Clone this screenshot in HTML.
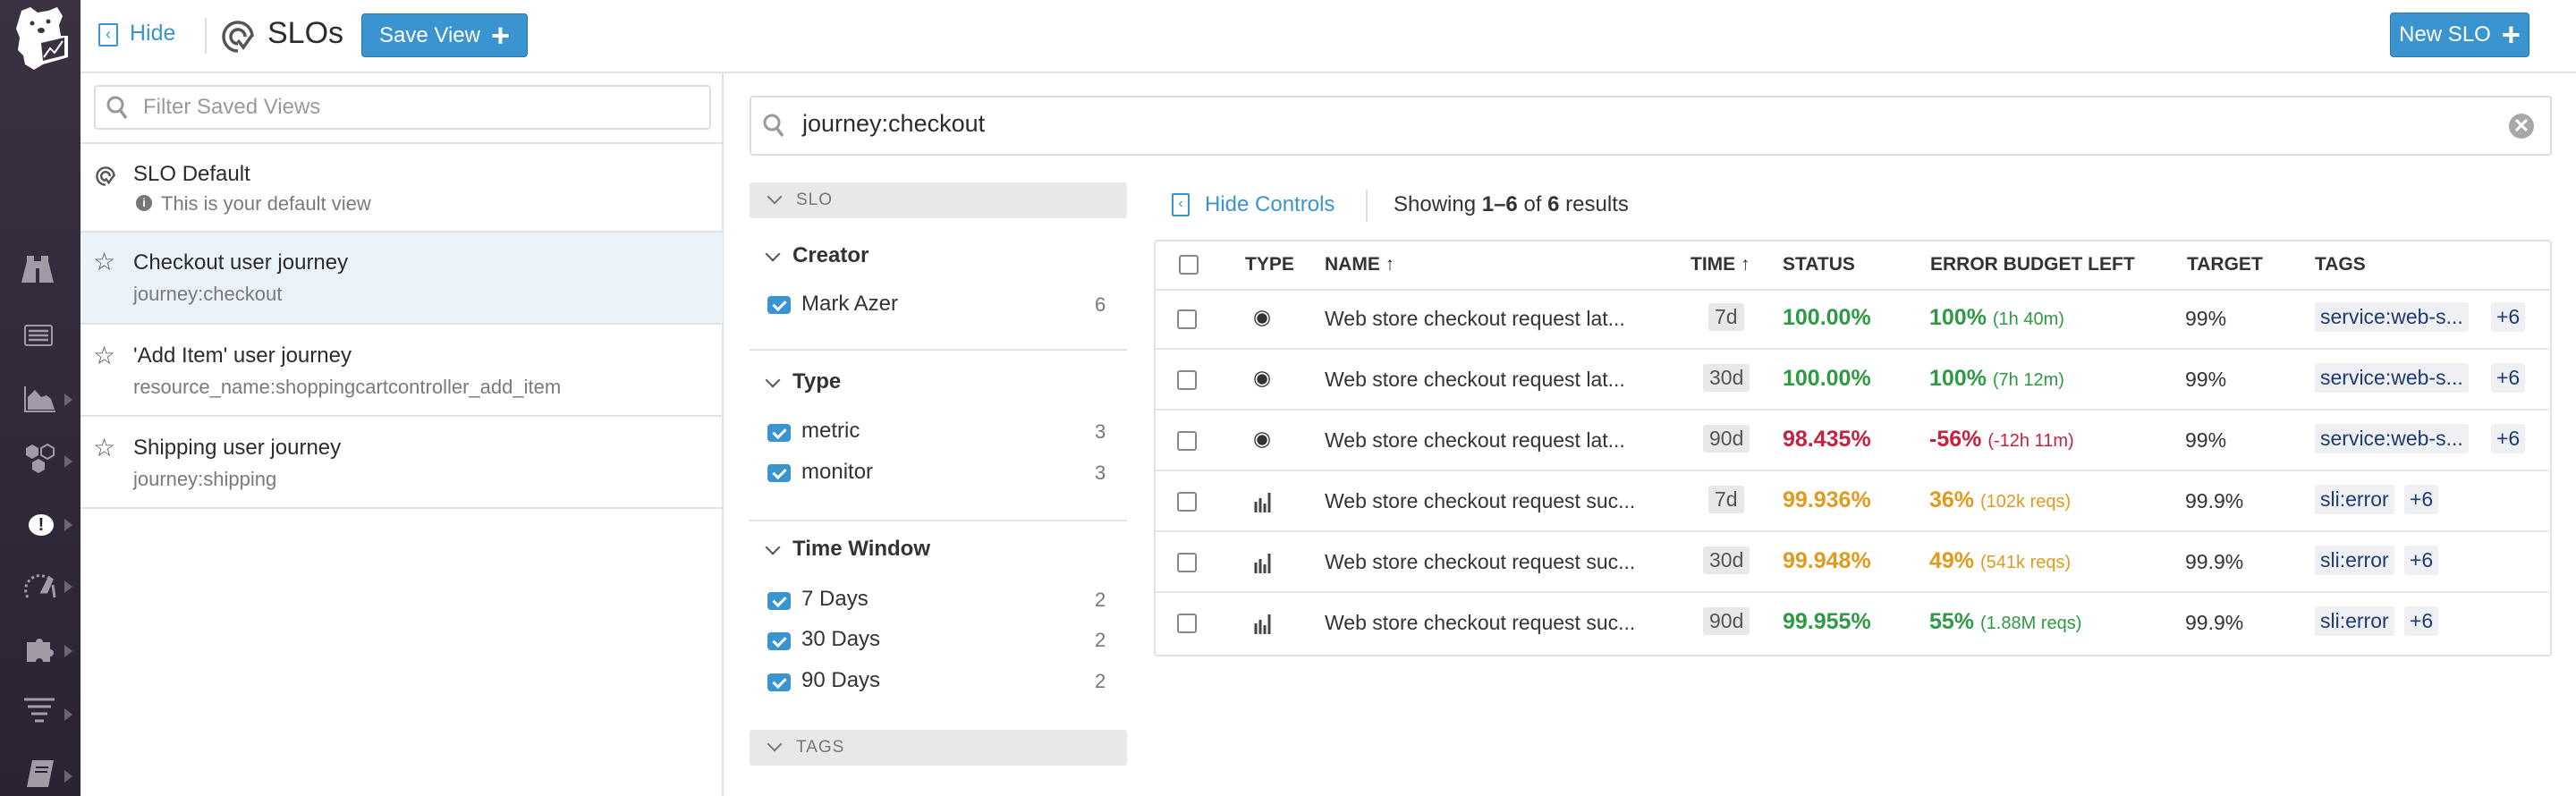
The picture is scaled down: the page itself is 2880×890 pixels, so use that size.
<!DOCTYPE html>
<html><head><meta charset="utf-8"><style>
*{box-sizing:border-box;margin:0;padding:0}
body{width:2880px;height:890px;overflow:hidden;background:#fff;font-family:"Liberation Sans",sans-serif;color:#2c2c2c;position:relative}
.a{position:absolute}
.side{left:0;top:0;width:90px;height:890px;background:linear-gradient(#3a3142,#2a2333)}
.btn{background:#3a94cf;border:1px solid #2a78ad;border-radius:4px;color:#fff;font-size:24px;display:flex;align-items:center;justify-content:center;gap:12px;white-space:nowrap}
.plus{font-size:36px;font-weight:bold;line-height:1}
.row{position:absolute;left:90px;width:718px;border-bottom:2px solid #e2e2e2}
.t1{position:absolute;left:59px;font-size:24px;color:#2c2c2c}
.t2{position:absolute;left:59px;font-size:22px;color:#7a7a7a}
.star{position:absolute;left:14px;font-size:28px;color:#555}
.fh{position:absolute;left:838px;width:422px;height:40px;background:#e8e8ea;border-radius:3px;color:#777;font-size:19px;padding-left:52px;line-height:40px;letter-spacing:1px}
.fh:before{content:"";position:absolute;left:22px;top:10px;width:10px;height:10px;border-right:2px solid #777;border-bottom:2px solid #777;transform:rotate(45deg)}
.fs{position:absolute;left:886px;font-size:24px;font-weight:bold;color:#333}
.fs:before{content:"";position:absolute;left:-28px;top:6px;width:10px;height:10px;border-right:2px solid #555;border-bottom:2px solid #555;transform:rotate(45deg)}
.cb{position:absolute;left:858px;width:26px;height:20px;background:#3a94cf;border-radius:4px}
.cb:after{content:"";position:absolute;left:9px;top:2px;width:6px;height:11px;border-right:3px solid #fff;border-bottom:3px solid #fff;transform:rotate(45deg)}
.fl{position:absolute;left:896px;font-size:24px;color:#333}
.fc{position:absolute;left:1224px;font-size:22px;color:#777}
.hr{position:absolute;left:838px;width:422px;height:2px;background:#e2e2e2}
.tbl{left:1290px;top:268px;width:1563px;height:466px;border:2px solid #e2e2e2;border-radius:4px}
.tr{position:absolute;left:0;width:1559px;border-bottom:2px solid #e2e2e2;height:68px}
.tr>*{position:absolute}
.chk{left:26px;width:22px;height:22px;border:2px solid #888;border-radius:3px;top:23px}
.th{font-size:21px;font-weight:bold;color:#333;top:17px}
.td{font-size:23px;color:#333;top:20px}
.pill{background:#e8e8e8;border-radius:3px;color:#555;font-size:23px;padding:2px 7px;top:16px}
.st{font-size:25px;font-weight:bold;top:18px}
.g{color:#2e9b44}.r{color:#c4223e}.o{color:#e19a1d}
.sm{font-size:20px;font-weight:normal}
.tag{background:#eef0f3;border-radius:3px;color:#1f3a6e;font-size:23px;padding:3px 6px;top:15px}
.arr{position:absolute;left:72px;width:0;height:0;border-left:9px solid #6c6573;border-top:7px solid transparent;border-bottom:7px solid transparent}
</style></head><body>
<div class="a side">
 <svg class="a" style="left:12px;top:6px" width="68" height="72" viewBox="0 0 68 72"><path d="M12 6 L22 2 L30 8 L42 6 L52 2 L58 12 L54 22 L56 34 L64 34 L64 58 L36 66 L26 72 L16 66 L14 56 L8 50 L10 36 L6 26 Z" fill="#fff"/><path d="M34 42 L60 36 L60 56 L36 62 Z" fill="#3a3142"/><path d="M37 58 L44 48 L49 53 L58 40" stroke="#fff" stroke-width="2" fill="none"/><circle cx="24" cy="20" r="2.5" fill="#3a3142"/><circle cx="42" cy="18" r="2.5" fill="#3a3142"/><ellipse cx="34" cy="28" rx="4" ry="3" fill="#3a3142"/></svg>
 <svg class="a" style="left:24px;top:286px" width="36" height="30" viewBox="0 0 36 30"><path d="M6 0h8v6h8V0h8v6l6 24H20V14h-4v16H0L6 6z" fill="#a09ba6"/></svg>
 <svg class="a" style="left:27px;top:363px" width="32" height="24" viewBox="0 0 32 24"><rect x="1" y="1" width="30" height="22" rx="2" fill="none" stroke="#a09ba6" stroke-width="2"/><path d="M5 7h22M5 12h22M5 17h22" stroke="#a09ba6" stroke-width="2.5"/></svg>
 <svg class="a" style="left:26px;top:432px" width="36" height="30" viewBox="0 0 36 30"><path d="M2 0v28h34" stroke="#a09ba6" stroke-width="2" fill="none"/><path d="M5 26V12l8-8 7 8 6-2 5 4 4 12z" fill="#a09ba6"/></svg>
 <svg class="a" style="left:28px;top:495px" width="34" height="34" viewBox="0 0 34 34"><path d="M8 2l7 4v8l-7 4-7-4V6z M15 18l7 4v8l-7 4-7-4v-8z" fill="#a09ba6"/><path d="M25 2l7 4v8l-7 4-7-4V6z" fill="none" stroke="#a09ba6" stroke-width="2"/></svg>
 <div class="a" style="left:32px;top:575px;width:28px;height:24px;background:#fff;border-radius:50%;color:#2a2333;font-weight:bold;font-size:20px;text-align:center;line-height:24px">!</div>
 <svg class="a" style="left:27px;top:640px" width="36" height="30" viewBox="0 0 36 30"><path d="M4 28A16 16 0 0 1 26 6" stroke="#a09ba6" stroke-width="3" stroke-dasharray="3 3" fill="none"/><path d="M20 22l8-16 3 2-6 14z M32 14l2 14" stroke="#a09ba6" stroke-width="3" fill="#a09ba6"/></svg>
 <svg class="a" style="left:30px;top:710px" width="32" height="30" viewBox="0 0 32 30"><path d="M0 8h10a4 4 0 1 1 8 0h8v8a4 4 0 1 1 0 8v6H18a4 4 0 1 0-8 0H0z" fill="#a09ba6"/></svg>
 <svg class="a" style="left:27px;top:780px" width="34" height="30" viewBox="0 0 34 30"><path d="M0 2h34M4 10h26M8 18h18M12 26h10" stroke="#a09ba6" stroke-width="3"/></svg>
 <svg class="a" style="left:28px;top:850px" width="32" height="30" viewBox="0 0 32 30"><path d="M8 0h24l-6 30H2z" fill="#a09ba6"/><path d="M12 8h14M11 13h14" stroke="#2a2333" stroke-width="2"/></svg>
 <div class="arr" style="top:440px"></div>
 <div class="arr" style="top:509px"></div>
 <div class="arr" style="top:580px"></div>
 <div class="arr" style="top:649px"></div>
 <div class="arr" style="top:721px"></div>
 <div class="arr" style="top:792px"></div>
 <div class="arr" style="top:861px"></div>
</div>
<!-- top bar -->
<div class="a" style="left:90px;top:80px;width:2790px;height:2px;background:#e2e2e2"></div>
<div class="a" style="left:110px;top:26px;width:22px;height:26px;border:2px solid #3a94cf;border-radius:2px;color:#3a94cf;font-size:18px;line-height:20px;text-align:center">‹</div>
<div class="a" style="left:145px;top:23px;font-size:25px;color:#3a94cf">Hide</div>
<div class="a" style="left:229px;top:20px;width:2px;height:40px;background:#ddd"></div>
<svg class="a" style="left:246px;top:21px" width="40" height="40" viewBox="0 0 40 40"><path d="M20 36A16 16 0 1 1 36 20" stroke="#555" stroke-width="3.5" fill="none"/><path d="M20 28A8 8 0 1 1 28 20" stroke="#555" stroke-width="3.5" fill="none"/><path d="M20 24l6 8 10-14" stroke="#555" stroke-width="3.5" fill="none"/></svg>
<div class="a" style="left:299px;top:18px;font-size:34px;color:#2c2c2c">SLOs</div>
<div class="a btn" style="left:404px;top:15px;width:186px;height:49px">Save View <span class="plus">+</span></div>
<div class="a btn" style="left:2672px;top:14px;width:156px;height:50px">New SLO <span class="plus">+</span></div>
<!-- left panel -->
<div class="a" style="left:807px;top:82px;width:2px;height:808px;background:#e2e2e2"></div>
<div class="a" style="left:105px;top:95px;width:690px;height:50px;border:2px solid #ddd;border-radius:4px"></div>
<svg class="a" style="left:118px;top:106px" width="26" height="28" viewBox="0 0 26 28"><circle cx="11" cy="11" r="8" stroke="#999" stroke-width="3" fill="none"/><path d="M17 18l6 8" stroke="#999" stroke-width="3.5"/></svg>
<div class="a" style="left:160px;top:106px;font-size:24px;color:#9a9a9a">Filter Saved Views</div>
<div class="a" style="left:90px;top:159px;width:718px;height:2px;background:#e2e2e2"></div>
<div class="row" style="top:161px;height:99px"><svg class="a" style="left:16px;top:24px" width="24" height="24" viewBox="0 0 40 40"><path d="M20 36A16 16 0 1 1 36 20" stroke="#555" stroke-width="4" fill="none"/><path d="M20 28A8 8 0 1 1 28 20" stroke="#555" stroke-width="4" fill="none"/><path d="M20 24l6 8 10-14" stroke="#555" stroke-width="4" fill="none"/></svg><div class="t1" style="top:20px">SLO Default</div><div class="a" style="left:62px;top:57px;width:18px;height:18px;border-radius:50%;background:#777;color:#fff;font-size:13px;font-weight:bold;text-align:center;line-height:18px">i</div><div class="t2" style="left:90px;top:54px">This is your default view</div></div>
<div class="row" style="top:260px;height:103px;background:#ebf3fa"><div class="star" style="top:16px">☆</div><div class="t1" style="top:20px">Checkout user journey</div><div class="t2" style="top:56px">journey:checkout</div></div>
<div class="row" style="top:363px;height:103px"><div class="star" style="top:18px">☆</div><div class="t1" style="top:21px">'Add Item' user journey</div><div class="t2" style="top:57px">resource_name:shoppingcartcontroller_add_item</div></div>
<div class="row" style="top:466px;height:103px"><div class="star" style="top:18px">☆</div><div class="t1" style="top:21px">Shipping user journey</div><div class="t2" style="top:57px">journey:shipping</div></div>
<!-- search -->
<div class="a" style="left:838px;top:107px;width:2015px;height:67px;border:2px solid #ddd;border-radius:4px"></div>
<svg class="a" style="left:852px;top:126px" width="26" height="28" viewBox="0 0 26 28"><circle cx="11" cy="11" r="8" stroke="#999" stroke-width="3" fill="none"/><path d="M17 18l6 8" stroke="#999" stroke-width="3.5"/></svg>
<div class="a" style="left:897px;top:123px;font-size:27px;color:#2c2c2c">journey:checkout</div>
<div class="a" style="left:2805px;top:127px;width:28px;height:28px;border-radius:50%;background:#a8a8ab;color:#fff;font-size:22px;font-weight:bold;text-align:center;line-height:28px">✕</div>
<!-- filters -->
<div class="fh" style="top:204px">SLO</div>
<div class="fs" style="top:272px">Creator</div>
<div class="cb" style="top:331px"></div><div class="fl" style="top:326px">Mark Azer</div><div class="fc" style="top:328px">6</div>
<div class="hr" style="top:390px"></div>
<div class="fs" style="top:413px">Type</div>
<div class="cb" style="top:474px"></div><div class="fl" style="top:468px">metric</div><div class="fc" style="top:470px">3</div>
<div class="cb" style="top:519px"></div><div class="fl" style="top:514px">monitor</div><div class="fc" style="top:516px">3</div>
<div class="hr" style="top:581px"></div>
<div class="fs" style="top:600px">Time Window</div>
<div class="cb" style="top:662px"></div><div class="fl" style="top:656px">7 Days</div><div class="fc" style="top:658px">2</div>
<div class="cb" style="top:707px"></div><div class="fl" style="top:701px">30 Days</div><div class="fc" style="top:703px">2</div>
<div class="cb" style="top:753px"></div><div class="fl" style="top:747px">90 Days</div><div class="fc" style="top:749px">2</div>
<div class="fh" style="top:816px">TAGS</div>
<!-- table controls -->
<div class="a" style="left:1310px;top:216px;width:20px;height:26px;border:2px solid #3a94cf;border-radius:2px;color:#3a94cf;font-size:16px;line-height:20px;text-align:center">‹</div>
<div class="a" style="left:1347px;top:215px;font-size:24px;color:#3a94cf">Hide Controls</div>
<div class="a" style="left:1527px;top:212px;width:2px;height:36px;background:#ddd"></div>
<div class="a" style="left:1558px;top:215px;font-size:24px;color:#333">Showing <b>1–6</b> of <b>6</b> results</div>
<div class="a tbl">
 <div class="tr" style="top:0;height:55px"><div class="chk" style="top:15px"></div><div class="th" style="left:100px;top:14px">TYPE</div><div class="th" style="left:189px;top:14px">NAME ↑</div><div class="th" style="left:598px;top:14px">TIME ↑</div><div class="th" style="left:701px;top:14px">STATUS</div><div class="th" style="left:866px;top:14px">ERROR BUDGET LEFT</div><div class="th" style="left:1153px;top:14px">TARGET</div><div class="th" style="left:1296px;top:14px">TAGS</div></div>
</div>
<div class="a" style="left:1290px;top:323px;width:1563px">
 <div class="tr" style="top:0"><div class="chk"></div><div class="td" style="left:111px;top:18px">◉</div><div class="td" style="left:191px">Web store checkout request lat...</div><div class="pill" style="left:620px">7d</div><div class="st g" style="left:703px">100.00%</div><div class="st g" style="left:867px">100% <span class="sm">(1h 40m)</span></div><div class="td" style="left:1153px">99%</div><div class="tag" style="left:1298px">service:web-s...</div><div class="tag" style="left:1495px">+6</div></div>
 <div class="tr" style="top:68px"><div class="chk"></div><div class="td" style="left:111px;top:18px">◉</div><div class="td" style="left:191px">Web store checkout request lat...</div><div class="pill" style="left:614px">30d</div><div class="st g" style="left:703px">100.00%</div><div class="st g" style="left:867px">100% <span class="sm">(7h 12m)</span></div><div class="td" style="left:1153px">99%</div><div class="tag" style="left:1298px">service:web-s...</div><div class="tag" style="left:1495px">+6</div></div>
 <div class="tr" style="top:136px"><div class="chk"></div><div class="td" style="left:111px;top:18px">◉</div><div class="td" style="left:191px">Web store checkout request lat...</div><div class="pill" style="left:614px">90d</div><div class="st r" style="left:703px">98.435%</div><div class="st r" style="left:867px">-56% <span class="sm">(-12h 11m)</span></div><div class="td" style="left:1153px">99%</div><div class="tag" style="left:1298px">service:web-s...</div><div class="tag" style="left:1495px">+6</div></div>
 <div class="tr" style="top:204px"><div class="chk"></div><svg style="left:112px;top:22px" width="22" height="24" viewBox="0 0 22 24"><path d="M2 12v12M7 8v16M12 14v10M17 2v22" stroke="#444" stroke-width="3"/></svg><div class="td" style="left:191px">Web store checkout request suc...</div><div class="pill" style="left:620px">7d</div><div class="st o" style="left:703px">99.936%</div><div class="st o" style="left:867px">36% <span class="sm">(102k reqs)</span></div><div class="td" style="left:1153px">99.9%</div><div class="tag" style="left:1298px">sli:error</div><div class="tag" style="left:1398px">+6</div></div>
 <div class="tr" style="top:272px"><div class="chk"></div><svg style="left:112px;top:22px" width="22" height="24" viewBox="0 0 22 24"><path d="M2 12v12M7 8v16M12 14v10M17 2v22" stroke="#444" stroke-width="3"/></svg><div class="td" style="left:191px">Web store checkout request suc...</div><div class="pill" style="left:614px">30d</div><div class="st o" style="left:703px">99.948%</div><div class="st o" style="left:867px">49% <span class="sm">(541k reqs)</span></div><div class="td" style="left:1153px">99.9%</div><div class="tag" style="left:1298px">sli:error</div><div class="tag" style="left:1398px">+6</div></div>
 <div class="tr" style="top:340px;border-bottom:none"><div class="chk"></div><svg style="left:112px;top:22px" width="22" height="24" viewBox="0 0 22 24"><path d="M2 12v12M7 8v16M12 14v10M17 2v22" stroke="#444" stroke-width="3"/></svg><div class="td" style="left:191px">Web store checkout request suc...</div><div class="pill" style="left:614px">90d</div><div class="st g" style="left:703px">99.955%</div><div class="st g" style="left:867px">55% <span class="sm">(1.88M reqs)</span></div><div class="td" style="left:1153px">99.9%</div><div class="tag" style="left:1298px">sli:error</div><div class="tag" style="left:1398px">+6</div></div>
</div>
</body></html>
